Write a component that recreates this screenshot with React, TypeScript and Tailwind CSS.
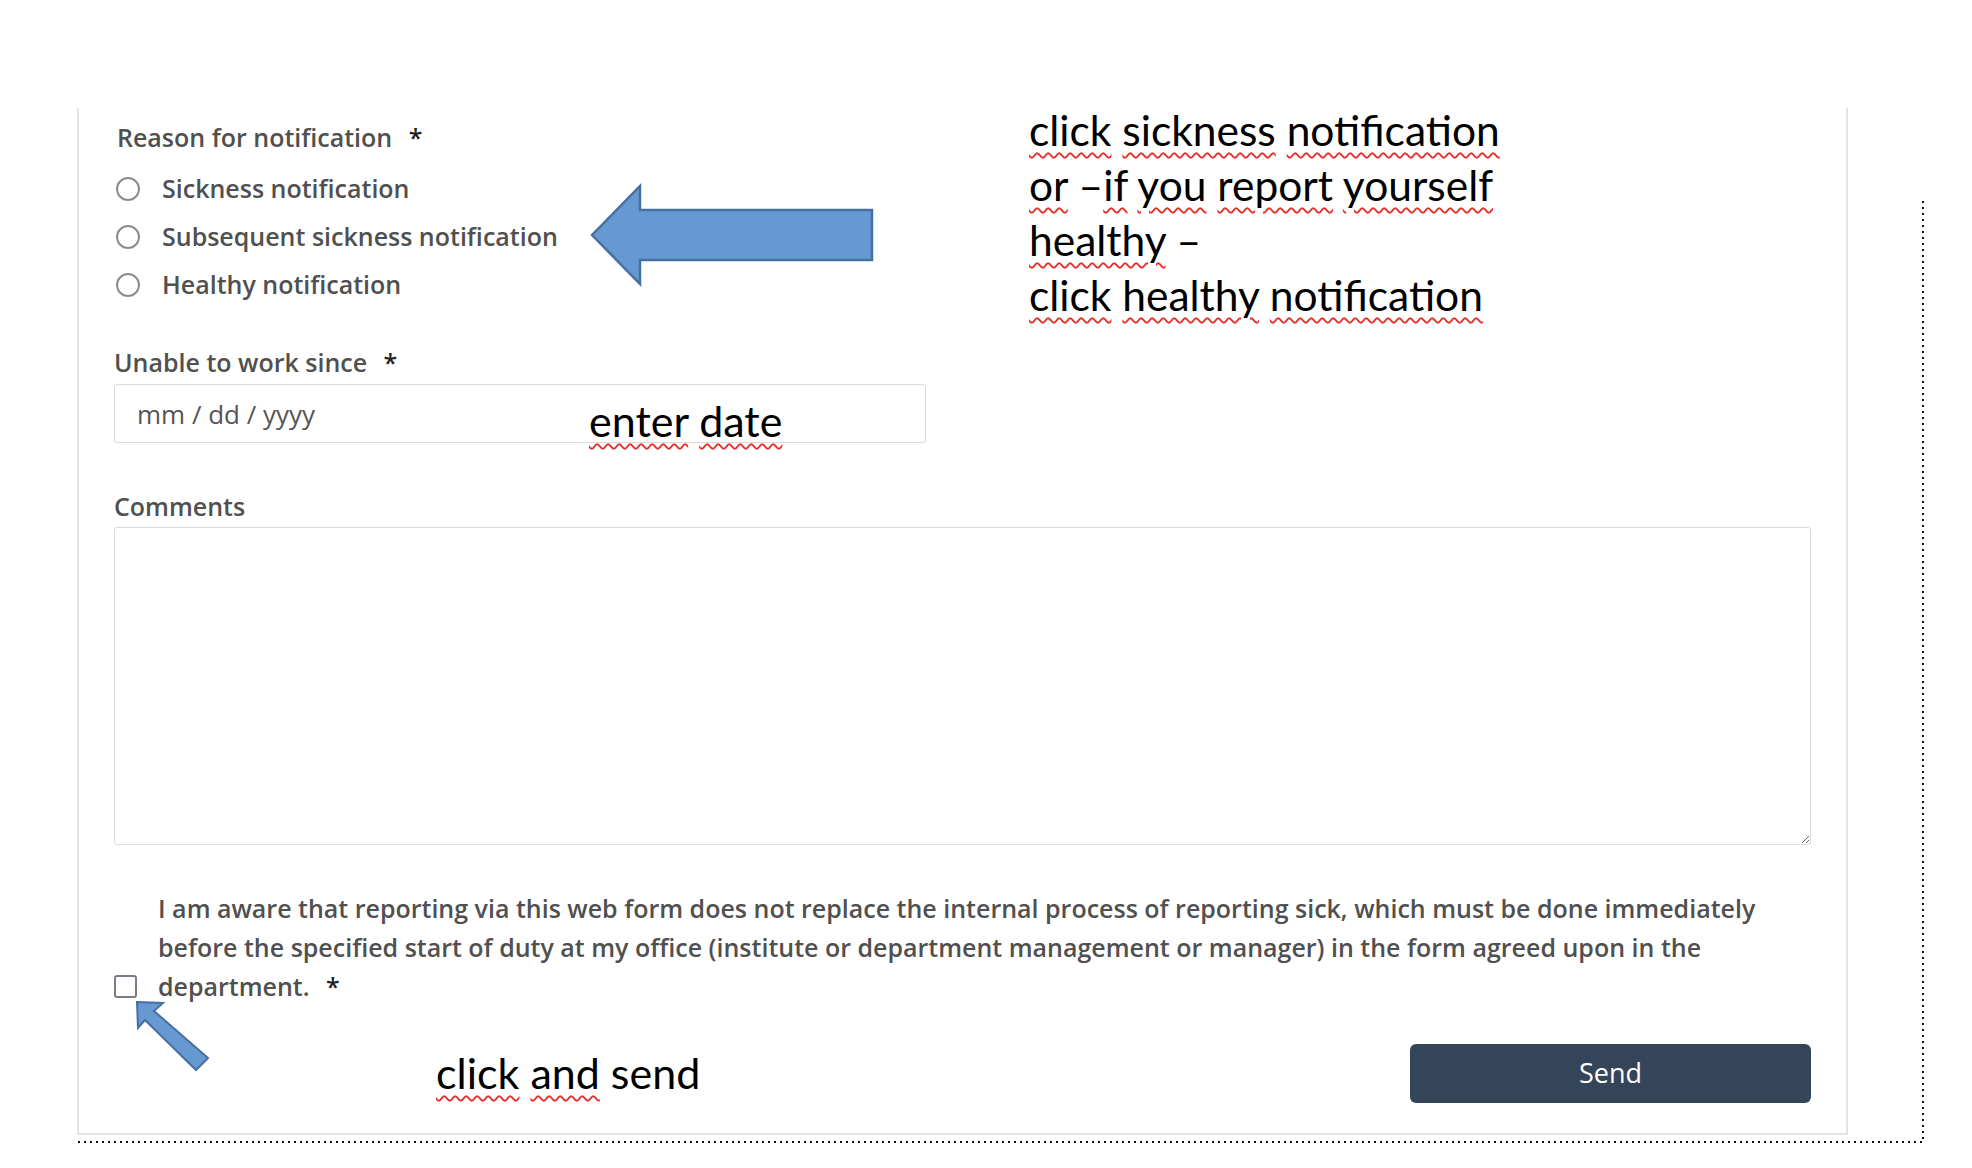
import React from 'react'

const SQUIGGLE = 'underline decoration-wavy decoration-[#e5322d] decoration-[1.5px] underline-offset-[6px]'

const REASONS = ['Sickness notification', 'Subsequent sickness notification', 'Healthy notification']

function Sq({ children }: { children: React.ReactNode }) {
  return <span className={SQUIGGLE}>{children}</span>
}

function BigArrow() {
  return (
    <svg width="286" height="104" viewBox="0 0 286 104" className="absolute left-[589px] top-[183px]">
      <polygon
        points="3,52 51,3 51,27 283,27 283,77 51,77 51,101"
        fill="#6698d2"
        stroke="#46709f"
        strokeWidth="2.5"
        strokeLinejoin="miter"
      />
    </svg>
  )
}

function SmallArrow() {
  return (
    <svg width="90" height="85" viewBox="0 0 90 85" className="absolute left-[130px] top-[995px]">
      <polygon points="7,7 33,8 24,16 78,63 66,75 15,25 8,33" fill="#6698d2" stroke="#46709f" strokeWidth="2" />
    </svg>
  )
}

export default function App() {
  return (
    <div className="relative w-[1972px] h-[1168px] bg-white overflow-hidden" style={{ fontFamily: '"Open Sans", sans-serif' }}>
      <div className="flex items-start">
        {/* form card */}
        <div className="mt-[108px] ml-[77px] w-[1771px] border-x-2 border-b-2 border-[#e3e3e3] px-[35px] pt-[14px] pb-[30px] text-[#505050] font-semibold">
          <div className="ml-[3px] text-[25px] leading-[30px]">
            Reason for notification <span className="ml-[10px] text-[#222]">*</span>
          </div>

          <div className="mt-[13px] flex flex-col">
            {REASONS.map((r) => (
              <label key={r} className="flex h-[48px] items-center">
                <span className="ml-[2px] w-[24px] h-[24px] rounded-full border-2 border-[#8c8c8c] shrink-0" />
                <span className="ml-[22px] text-[25px]">{r}</span>
              </label>
            ))}
          </div>

          <div className="mt-[38px] text-[25px] leading-[30px]">
            Unable to work since <span className="ml-[10px] text-[#222]">*</span>
          </div>
          <input
            type="text"
            placeholder="mm / dd / yyyy"
            className="mt-[7px] block w-[812px] h-[59px] rounded-[3px] border border-[#dadada] px-[22px] text-[26px] font-normal text-[#555] placeholder:text-[#555] outline-none"
          />

          <div className="mt-[48px] text-[25px] leading-[30px]">Comments</div>
          <textarea className="mt-[6px] block w-full h-[318px] rounded-[3px] border border-[#dadada] outline-none" />

          <div className="mt-[44px] flex items-end">
            <span className="mb-[8px] w-[23px] h-[23px] rounded-[3px] border-2 border-[#7d7b88] shrink-0" />
            <p className="ml-[21px] text-[25px] leading-[39px]">
              I am aware that reporting via this web form does not replace the internal process of reporting sick, which must be done immediately
              <br />
              before the specified start of duty at my office (institute or department management or manager) in the form agreed upon in the
              <br />
              department. <span className="ml-[10px] text-[#222]">*</span>
            </p>
          </div>

          <div className="mt-[38px] flex justify-end">
            <button className="w-[401px] h-[59px] rounded-[6px] bg-[#354559] text-white text-[27px] font-normal">Send</button>
          </div>
        </div>

        {/* dotted page edge, right side */}
        <div className="ml-[74px] mt-[201px] w-[2px] h-[942px] bg-[repeating-linear-gradient(180deg,#111_0_2px,transparent_2px_6px)]" />
      </div>
      {/* dotted page edge, bottom */}
      <div className="ml-[78px] -mt-[2px] w-[1846px] h-[2px] bg-[repeating-linear-gradient(90deg,#111_0_2px,transparent_2px_6px)]" />

      {/* annotations */}
      <BigArrow />
      <SmallArrow />

      <div className="absolute left-[1029px] top-[102px] text-[42.5px] leading-[55px] text-black" style={{ fontFamily: 'Lato, sans-serif' }}>
        <div>
          <Sq>click</Sq> <Sq>sickness</Sq> <Sq>notification</Sq>
        </div>
        <div>
          <Sq>or</Sq> –<Sq>if</Sq> <Sq>you</Sq> <Sq>report</Sq> <Sq>yourself</Sq>
        </div>
        <div>
          <Sq>healthy</Sq> –
        </div>
        <div>
          <Sq>click</Sq> <Sq>healthy</Sq> <Sq>notification</Sq>
        </div>
      </div>

      <div className="absolute left-[589px] top-[393px] text-[43px] leading-[55px] text-black" style={{ fontFamily: 'Lato, sans-serif' }}>
        <Sq>enter</Sq> <Sq>date</Sq>
      </div>

      <div className="absolute left-[436px] top-[1045px] text-[43px] leading-[55px] text-black" style={{ fontFamily: 'Lato, sans-serif' }}>
        <Sq>click</Sq> <Sq>and</Sq> send
      </div>
    </div>
  )
}
